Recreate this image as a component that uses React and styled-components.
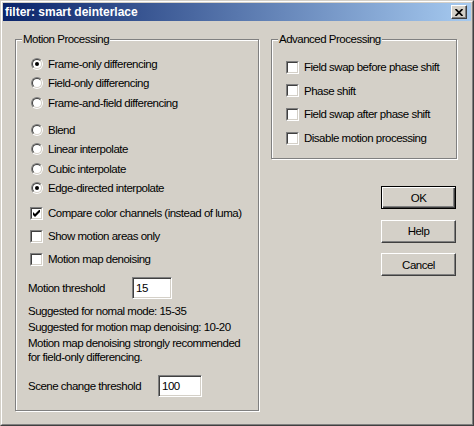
import React from "react";
import styled, { createGlobalStyle } from "styled-components";

const GlobalStyle = createGlobalStyle`
  html, body {
    margin: 0;
    padding: 0;
    background: #d4d0c8;
  }
  body {
    font-family: "Liberation Sans", Arial, sans-serif;
    font-size: 11.5px;
    letter-spacing: -0.5px;
    color: #000;
  }
`;

const motionModes = [
  ["Frame-only differencing", true],
  ["Field-only differencing", false],
  ["Frame-and-field differencing", false],
];

const interpModes = [
  ["Blend", false],
  ["Linear interpolate", false],
  ["Cubic interpolate", false],
  ["Edge-directed interpolate", true],
];

const motionChecks = [
  ["Compare color channels (instead of luma)", true],
  ["Show motion areas only", false],
  ["Motion map denoising", false],
];

const advancedChecks = [
  ["Field swap before phase shift", 23.5],
  ["Phase shift", 23.5],
  ["Field swap after phase shift", 23.5],
  ["Disable motion processing", 25],
];

function Radio({ checked }) {
  return (
    <RadioOuter>
      <RadioInner>{checked && <RadioDot />}</RadioInner>
    </RadioOuter>
  );
}

function Checkbox({ checked }) {
  return (
    <CheckOuter>
      <CheckInner>
        {checked && (
          <svg width="7" height="7" viewBox="0 0 7 7">
            <path d="M0 2 L2 4 L7 -1 L7 2 L2 7 L0 5 Z" fill="#000" />
          </svg>
        )}
      </CheckInner>
    </CheckOuter>
  );
}

export default function App() {
  return (
    <>
      <GlobalStyle />
      <Window>
        <Frame>
          <TitleBar>
            <TitleText>filter: smart deinterlace</TitleText>
            <CloseButton>
              <svg width="8" height="7" viewBox="0 0 8 7">
                <path
                  d="M0.5 0 L7.5 7 M7.5 0 L0.5 7"
                  stroke="#000"
                  strokeWidth="1.7"
                />
              </svg>
            </CloseButton>
          </TitleBar>

          <Body>
            <GroupBox width={244} height={372}>
              <Legend>Motion Processing</Legend>
              <Section top={14}>
                {motionModes.map(([label, on]) => (
                  <ChoiceRow key={label} h={19.5}>
                    <Radio checked={on} />
                    <ChoiceLabel>{label}</ChoiceLabel>
                  </ChoiceRow>
                ))}
              </Section>
              <Section top={8}>
                {interpModes.map(([label, on]) => (
                  <ChoiceRow key={label} h={19.3}>
                    <Radio checked={on} />
                    <ChoiceLabel>{label}</ChoiceLabel>
                  </ChoiceRow>
                ))}
              </Section>
              <Section top={4}>
                {motionChecks.map(([label, on]) => (
                  <ChoiceRow key={label} h={23}>
                    <Checkbox checked={on} />
                    <ChoiceLabel>{label}</ChoiceLabel>
                  </ChoiceRow>
                ))}
              </Section>
              <Section top={6.3}>
                <FieldRow>
                  <FieldLabel w={104}>Motion threshold</FieldLabel>
                  <Edit w={40}>15</Edit>
                </FieldRow>
              </Section>
              <Section top={4}>
                <Note lh={16}>
                  Suggested for nomal mode: 15-35
                  <br />
                  Suggested for motion map denoising: 10-20
                </Note>
              </Section>
              <Section top={1}>
                <Note lh={14}>
                  Motion map denoising strongly recommended
                  <br />
                  for field-only differencing.
                </Note>
              </Section>
              <Section top={11}>
                <FieldRow>
                  <FieldLabel w={130}>Scene change threshold</FieldLabel>
                  <Edit w={44}>100</Edit>
                </FieldRow>
              </Section>
            </GroupBox>

            <RightColumn>
              <GroupBox width={186} height={120}>
                <Legend>Advanced Processing</Legend>
                <AdvancedList>
                  {advancedChecks.map(([label, h]) => (
                    <ChoiceRow key={label} h={h}>
                      <Checkbox />
                      <ChoiceLabel>{label}</ChoiceLabel>
                    </ChoiceRow>
                  ))}
                </AdvancedList>
              </GroupBox>
              <ButtonStack>
                <Button $default>OK</Button>
                <Button>Help</Button>
                <Button>Cancel</Button>
              </ButtonStack>
            </RightColumn>
          </Body>
        </Frame>
      </Window>
    </>
  );
}

const Window = styled.div`
  width: 474px;
  height: 426px;
  box-sizing: border-box;
  border: 1px solid;
  border-color: #d4d0c8 #404040 #404040 #d4d0c8;
  background: #d4d0c8;
`;

const Frame = styled.div`
  height: 100%;
  box-sizing: border-box;
  border: 1px solid;
  border-color: #fff #808080 #808080 #fff;
  padding: 1px;
  display: flex;
  flex-direction: column;
`;

const TitleBar = styled.div`
  height: 18px;
  flex: none;
  display: flex;
  align-items: center;
  justify-content: space-between;
  padding: 0 4px 0 2px;
  background: linear-gradient(to right, #0a246a, #a6caf0);
`;

const TitleText = styled.span`
  color: #fff;
  font-weight: bold;
  font-size: 12px;
  letter-spacing: 0;
`;

const CloseButton = styled.div`
  width: 16px;
  height: 14px;
  box-sizing: border-box;
  display: flex;
  align-items: center;
  justify-content: center;
  background: #d4d0c8;
  border: 1px solid;
  border-color: #fff #404040 #404040 #fff;
  box-shadow: inset -1px -1px #808080;
`;

const Body = styled.div`
  flex: 1;
  display: flex;
  gap: 12px;
  padding: 18px 0 0 12px;
`;

const GroupBox = styled.div`
  position: relative;
  box-sizing: border-box;
  width: ${(p) => p.width}px;
  height: ${(p) => p.height}px;
  border: 1px solid #808080;
  box-shadow: inset 1px 1px #fff, 1px 1px #fff;
  display: flex;
  flex-direction: column;
`;

const Legend = styled.span`
  position: absolute;
  top: -7px;
  left: 6px;
  padding: 0 1px;
  line-height: 13px;
  background: #d4d0c8;
`;

const Section = styled.div`
  margin-top: ${(p) => p.top}px;
  display: flex;
  flex-direction: column;
`;

const ChoiceRow = styled.div`
  height: ${(p) => p.h}px;
  display: flex;
  align-items: center;
  padding-left: 14px;
`;

const ChoiceLabel = styled.span`
  margin-left: 5px;
  white-space: nowrap;
`;

const RadioOuter = styled.span`
  width: 12px;
  height: 12px;
  margin-left: 1px;
  box-sizing: border-box;
  border-radius: 50%;
  border: 1px solid;
  border-color: #808080 #fff #fff #808080;
  display: flex;
`;

const RadioInner = styled.span`
  flex: 1;
  border-radius: 50%;
  border: 1px solid;
  border-color: #404040 #d4d0c8 #d4d0c8 #404040;
  background: #fff;
  display: flex;
  align-items: center;
  justify-content: center;
`;

const RadioDot = styled.span`
  width: 4px;
  height: 4px;
  border-radius: 50%;
  background: #000;
`;

const CheckOuter = styled.span`
  width: 13px;
  height: 13px;
  box-sizing: border-box;
  border: 1px solid;
  border-color: #808080 #fff #fff #808080;
  display: flex;
`;

const CheckInner = styled.span`
  flex: 1;
  border: 1px solid;
  border-color: #404040 #d4d0c8 #d4d0c8 #404040;
  background: #fff;
  display: flex;
  align-items: center;
  justify-content: center;
`;

const FieldRow = styled.div`
  height: 22px;
  display: flex;
  align-items: center;
  padding-left: 12px;
`;

const FieldLabel = styled.span`
  width: ${(p) => p.w}px;
  white-space: nowrap;
`;

const Edit = styled.div`
  width: ${(p) => p.w}px;
  height: 22px;
  box-sizing: border-box;
  border: 1px solid;
  border-color: #808080 #fff #fff #808080;
  box-shadow: inset 1px 1px #404040, inset -1px -1px #d4d0c8;
  background: #fff;
  padding: 0 3px;
  display: flex;
  align-items: center;
`;

const Note = styled.div`
  padding-left: 12px;
  line-height: ${(p) => p.lh}px;
  white-space: nowrap;
`;

const RightColumn = styled.div`
  display: flex;
  flex-direction: column;
`;

const AdvancedList = styled.div`
  margin-top: 15.25px;
  display: flex;
  flex-direction: column;
`;

const ButtonStack = styled.div`
  margin-top: 27px;
  margin-right: 1px;
  display: flex;
  flex-direction: column;
  align-items: flex-end;
  gap: 10.5px;
`;

const Button = styled.div`
  width: 75px;
  height: 23px;
  box-sizing: border-box;
  display: flex;
  align-items: center;
  justify-content: center;
  background: #d4d0c8;
  border: 1px solid;
  border-color: ${(p) =>
    p.$default ? "#000" : "#fff #404040 #404040 #fff"};
  box-shadow: ${(p) =>
    p.$default
      ? "inset 1px 1px #fff, inset -1px -1px #404040, inset -2px -2px #808080"
      : "inset -1px -1px #808080"};
`;
